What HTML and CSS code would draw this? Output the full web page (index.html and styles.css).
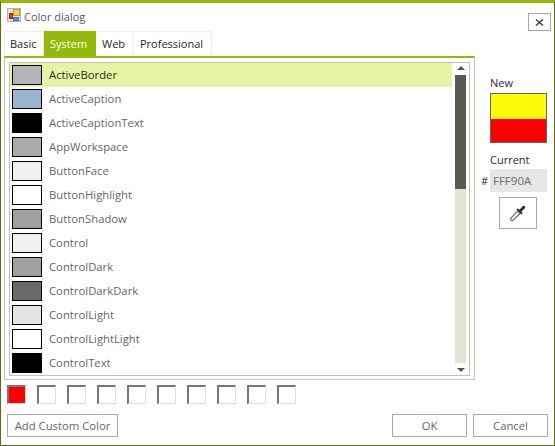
FILE: index.html
```html
<!DOCTYPE html>
<html lang="en">
<head>
    <meta charset="UTF-8">
    <title>Color dialog</title>
    <link rel="stylesheet" href="styles.css">
</head>
<body>
    <div class="dialog">
        <!-- Title bar -->
        <div class="titlebar">
            <svg class="app-icon" width="14" height="14" viewBox="0 0 14 14">
                <rect x="0.5" y="0.5" width="13" height="13" fill="#e4e4e4" stroke="#b0b0b0"/>
                <rect x="6.5" y="1.5" width="6" height="6" fill="#f7cf5a" stroke="#d39a24"/>
                <rect x="2.5" y="5.5" width="3" height="5" fill="#d93a3a" stroke="#9a2525"/>
                <rect x="6.5" y="9.5" width="5" height="3" fill="#5a9ae6" stroke="#3a6fb4"/>
            </svg>
            <span class="title">Color dialog</span>
            <button class="close">
                <svg width="9" height="9" viewBox="0 0 9 9"><path d="M1 1.5L8 7.5M8 1.5L1 7.5" stroke="#444" stroke-width="1.6"/></svg>
            </button>
        </div>

        <div class="content">
            <div class="left">
                <!-- Tabs -->
                <div class="tabs">
                    <div class="tab">Basic</div>
                    <div class="tab active">System</div>
                    <div class="tab">Web</div>
                    <div class="tab">Professional</div>
                </div>

                <div class="panel">
                    <div class="list">
                        <div class="rows">
                            <div class="row selected"><span class="swatch" style="background:#b4b4b4"></span>ActiveBorder</div>
                            <div class="row"><span class="swatch" style="background:#99b4d1"></span>ActiveCaption</div>
                            <div class="row"><span class="swatch" style="background:#000000"></span>ActiveCaptionText</div>
                            <div class="row"><span class="swatch" style="background:#ababab"></span>AppWorkspace</div>
                            <div class="row"><span class="swatch" style="background:#f0f0f0"></span>ButtonFace</div>
                            <div class="row"><span class="swatch" style="background:#ffffff"></span>ButtonHighlight</div>
                            <div class="row"><span class="swatch" style="background:#a0a0a0"></span>ButtonShadow</div>
                            <div class="row"><span class="swatch" style="background:#f0f0f0"></span>Control</div>
                            <div class="row"><span class="swatch" style="background:#a0a0a0"></span>ControlDark</div>
                            <div class="row"><span class="swatch" style="background:#696969"></span>ControlDarkDark</div>
                            <div class="row"><span class="swatch" style="background:#e3e3e3"></span>ControlLight</div>
                            <div class="row"><span class="swatch" style="background:#ffffff"></span>ControlLightLight</div>
                            <div class="row"><span class="swatch" style="background:#000000"></span>ControlText</div>
                        </div>
                        <div class="scrollbar">
                            <span class="arrow up"></span>
                            <div class="track"><div class="thumb"></div></div>
                            <span class="arrow down"></span>
                        </div>
                    </div>
                </div>

                <!-- Custom colors -->
                <div class="custom">
                    <span class="slot filled"></span>
                    <span class="slot"></span>
                    <span class="slot"></span>
                    <span class="slot"></span>
                    <span class="slot"></span>
                    <span class="slot"></span>
                    <span class="slot"></span>
                    <span class="slot"></span>
                    <span class="slot"></span>
                    <span class="slot"></span>
                </div>
            </div>

            <!-- New / current preview -->
            <div class="side">
                <div class="label">New</div>
                <div class="preview">
                    <div class="new-color"></div>
                    <div class="current-color"></div>
                </div>
                <div class="label current-label">Current</div>
                <div class="hex-row">
                    <span class="hash">#</span>
                    <div class="hex">FFF90A</div>
                </div>
                <button class="picker">
                    <svg width="16" height="16" viewBox="0 0 16 16">
                        <path d="M1 15.5L0.5 13.5L7.5 6L10 8.5L2.8 15.5Z" fill="#ffffff" stroke="#6e6e6e" stroke-width="1.2"/>
                        <path d="M6.5 4.5L11.5 9.5L12.8 8.2L11.3 6.7L15 3C16 1.5 14.5 0 13 1L9.3 4.7L7.8 3.2Z" fill="#2a2a2a"/>
                    </svg>
                </button>
            </div>
        </div>

        <!-- Bottom buttons -->
        <div class="footer">
            <button class="btn add">Add Custom Color</button>
            <div class="spacer"></div>
            <button class="btn">OK</button>
            <button class="btn">Cancel</button>
        </div>
    </div>
</body>
</html>
```

FILE: styles.css
```css
/* Page */
html, body {
    margin: 0;
    padding: 0;
    background-color: #ffffff;
}

.dialog {
    width: 555px;
    height: 446px;
    box-sizing: border-box;
    display: flex;
    flex-direction: column;
    background-color: #ffffff;
    border: 1px solid #5c6e0b;
    border-top: 3px solid #94b90a;
    font-family: "Open Sans", "Noto Sans", sans-serif;
    font-size: 11.3px;
    color: #5f6670;
}

/* Title bar */
.titlebar {
    height: 28px;
    display: flex;
    align-items: flex-start;
    padding: 5px 3px 0 6px;
    box-sizing: border-box;
}

.app-icon {
    flex: none;
}

.title {
    margin: 1px 0 0 3px;
    font-size: 11px;
    line-height: 15px;
    color: #55595f;
}

.close {
    width: 23px;
    height: 18px;
    margin: 5px 0 0 auto;
    padding: 0;
    display: flex;
    align-items: center;
    justify-content: center;
    background-color: #ffffff;
    border: 1px solid #a9a9a9;
}

/* Main area */
.content {
    display: flex;
}

.left {
    width: 471px;
    margin-left: 3px;
}

/* Tabs */
.tabs {
    display: grid;
    grid-template-columns: 40px 52px 38px 78px;
    height: 25px;
}

.tab {
    box-sizing: border-box;
    padding-left: 6px;
    font-size: 11px;
    line-height: 23px;
    color: #1f1f1f;
    border: 1px solid #eeeeee;
    border-bottom: none;
    border-left: none;
}

.tab:first-child {
    padding-left: 5px;
    border-left: 1px solid #eeeeee;
}

.tab.active {
    background-color: #94b90a;
    color: #ffffff;
    border-color: #94b90a;
}

/* Panel with the list */
.panel {
    height: 324px;
    box-sizing: border-box;
    padding: 4px;
    border: 1px solid #c3c3b3;
    border-top: 2px solid #94b90a;
}

.list {
    height: 314px;
    box-sizing: border-box;
    display: flex;
    border: 1px solid #c3c3b3;
}

.rows {
    width: 442px;
    height: 312px;
    overflow: hidden;
}

.row {
    height: 24px;
    display: flex;
    align-items: flex-start;
    padding-left: 2px;
    line-height: 23px;
    color: #5f6670;
}

.row.selected {
    background-color: #e5f5a5;
    color: #2a2a2a;
}

.swatch {
    width: 30px;
    height: 20px;
    box-sizing: border-box;
    margin: 2px 7px 0 0;
    border: 1px solid #000000;
}

/* Scrollbar */
.scrollbar {
    width: 11px;
    margin-left: 3px;
    display: flex;
    flex-direction: column;
    align-items: center;
}

.arrow {
    width: 0;
    height: 0;
    border-left: 4px solid transparent;
    border-right: 4px solid transparent;
}

.arrow.up {
    margin: 3px 0 5px;
    border-bottom: 4px solid #555555;
}

.arrow.down {
    margin: 5px 0 3px;
    border-top: 4px solid #555555;
}

.track {
    flex: 1;
    width: 11px;
    background-color: #e2e5d5;
}

.thumb {
    height: 114px;
    background-color: #5a5a50;
}

/* Custom color slots */
.custom {
    display: flex;
    gap: 11px;
    margin: 5px 0 0 3px;
}

.slot {
    width: 19px;
    height: 19px;
    box-sizing: border-box;
    border: 2px solid #dddddd;
    border-top-color: #777777;
    border-left-color: #777777;
    border-right-width: 1px;
    border-bottom-width: 1px;
}

.slot.filled {
    background-color: #ff0000;
}

/* New / current */
.side {
    width: 60px;
    margin-left: 15px;
    padding-top: 44px;
    font-size: 11px;
    color: #1f2a44;
}

.label {
    line-height: 15px;
    height: 15px;
}

.preview {
    width: 57px;
    height: 50px;
    margin-top: 3px;
    box-sizing: border-box;
    display: flex;
    flex-direction: column;
    border: 1px solid #666666;
}

.new-color {
    height: 25px;
    background-color: #fff90a;
}

.current-color {
    flex: 1;
    background-color: #ff0000;
}

.current-label {
    margin-top: 9px;
}

.hex-row {
    display: flex;
    margin: 2px 0 0 -9px;
}

.hash {
    width: 9px;
    line-height: 23px;
}

.hex {
    width: 57px;
    height: 23px;
    box-sizing: border-box;
    padding-left: 3px;
    font-size: 11.5px;
    line-height: 23px;
    background-color: #e6e6e6;
    color: #6b6b72;
}

.picker {
    width: 38px;
    height: 32px;
    margin: 5px 0 0 9px;
    padding: 0;
    display: flex;
    align-items: center;
    justify-content: center;
    background-color: #ffffff;
    border: 1px solid #a9a9a9;
}

/* Footer buttons */
.footer {
    display: flex;
    gap: 6px;
    margin: 10px 6px 0;
}

.spacer {
    flex: 1;
}

.btn {
    width: 75px;
    height: 23px;
    padding: 0;
    background-color: #ffffff;
    border: 1px solid #a9a9a9;
    font: inherit;
    color: #5f6670;
}

.btn.add {
    width: 111px;
}
```
